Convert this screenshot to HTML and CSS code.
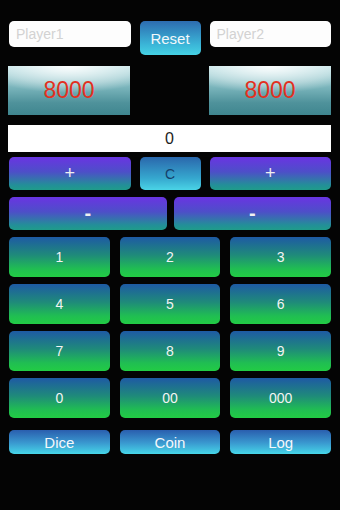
FILE: index.html
```html
<!DOCTYPE html>
<html lang="en">
<head>
  <meta charset="UTF-8" />
  <meta name="viewport" content="width=device-width, initial-scale=1.0"/>
  <title>Life Counter</title>
  <link rel="stylesheet" href="styles.css">
</head>
<body>
  <div class="app">
    <div class="row-top">
      <input type="text" class="name" placeholder="Player1" />
      <button class="reset">Reset</button>
      <input type="text" class="name" placeholder="Player2" />
    </div>

    <div class="row-score">
      <div class="score">8000</div>
      <div></div>
      <div class="score">8000</div>
    </div>

    <div class="display">0</div>

    <div class="row-plus">
      <button class="op">+</button>
      <button class="clear">C</button>
      <button class="op">+</button>
    </div>

    <div class="row-minus">
      <button class="op">-</button>
      <button class="op">-</button>
    </div>

    <div class="keys">
      <button class="num">1</button>
      <button class="num">2</button>
      <button class="num">3</button>
      <button class="num">4</button>
      <button class="num">5</button>
      <button class="num">6</button>
      <button class="num">7</button>
      <button class="num">8</button>
      <button class="num">9</button>
      <button class="num">0</button>
      <button class="num">00</button>
      <button class="num">000</button>
    </div>

    <div class="tools">
      <button class="tool">Dice</button>
      <button class="tool">Coin</button>
      <button class="tool">Log</button>
    </div>
  </div>
</body>
</html>
```

FILE: styles.css
```css
* { box-sizing: border-box; }
body {
  margin: 0;
  background-color: #040404;
  font-family: 'Liberation Sans', Arial, sans-serif;
  width: 340px;
  height: 510px;
  overflow: hidden;
}
.app {
  padding: 21px 9px 0 9px;
  display: flex;
  flex-direction: column;
}
button {
  border: none;
  font-family: inherit;
  padding: 0;
  cursor: pointer;
}

.row-top, .row-score, .row-plus {
  display: grid;
  grid-template-columns: 1fr 61px 1fr;
  gap: 9px;
}
.row-top { align-items: start; height: 34px; }
.name {
  height: 26px;
  border: none;
  border-radius: 5px;
  background-color: #fdfdfd;
  font-family: inherit;
  font-size: 14px;
  padding: 0 7px;
  width: 100%;
}
.name::placeholder { color: #d2d2d2; }
.reset {
  height: 34px;
  border-radius: 5px;
  background: linear-gradient(#2d6cb0, #3bb6d8 70%, #45d2e4);
  color: #f2f8fb;
  font-size: 15px;
}

.row-score { margin-top: 11px; margin-left: -1px; height: 49px; }
.score {
  display: flex;
  align-items: center;
  justify-content: center;
  color: #e3301f;
  font-size: 23px;
  background:
    radial-gradient(ellipse 75% 55% at 50% 0%, rgba(255,255,255,0.95), rgba(255,255,255,0.35) 70%, rgba(255,255,255,0) 100%),
    linear-gradient(#b9e0e4, #78b3ba 45%, #4f929b 75%, #3f868f);
}

.display {
  margin-top: 10px;
  margin-left: -1px;
  height: 27px;
  background-color: #fff;
  display: flex;
  align-items: center;
  justify-content: center;
  font-size: 16px;
  color: #222;
}

.row-plus { margin-top: 5px; height: 33px; }
.op {
  border-radius: 5px;
  background: linear-gradient(#6a34e2, #4d4fc8 45%, #238f98 85%, #1f9c8a);
  color: #f0f0f0;
  font-size: 18px;
}
.clear {
  border-radius: 5px;
  background: linear-gradient(#2a67ac, #36a8cf 65%, #4ad4e6);
  color: #15406a;
  font-size: 14px;
}

.row-minus {
  margin-top: 7px;
  height: 33px;
  display: grid;
  grid-template-columns: 1fr 1fr;
  gap: 7px;
}
.row-minus .op { font-size: 20px; font-weight: bold; }

.keys {
  margin-top: 7px;
  display: grid;
  grid-template-columns: repeat(3, 1fr);
  grid-auto-rows: 40px;
  column-gap: 10px;
  row-gap: 7px;
}
.num {
  border-radius: 5px;
  background: linear-gradient(#1e5aa4, #1f8a7a 45%, #20be52 80%, #22cc44);
  color: #f4f4f4;
  font-size: 14px;
}

.tools {
  margin-top: 12px;
  display: grid;
  grid-template-columns: repeat(3, 1fr);
  grid-auto-rows: 24px;
  column-gap: 10px;
}
.tool {
  border-radius: 5px;
  background: linear-gradient(#2a5eae, #3a9ad0 55%, #46d6e8);
  color: #f4f8fb;
  font-size: 15px;
}
```
